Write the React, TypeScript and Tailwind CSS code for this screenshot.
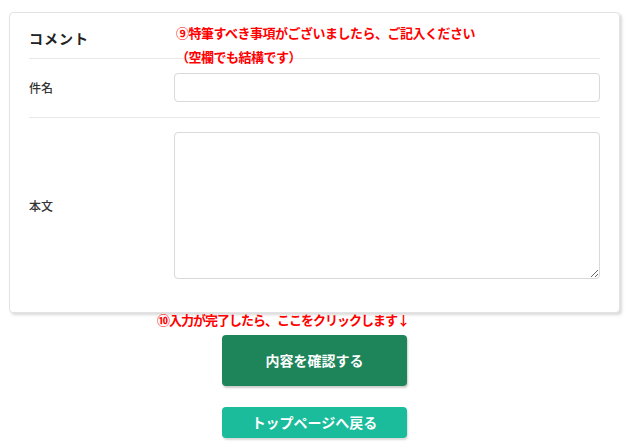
import React from 'react';

const font = { fontFamily: '"Noto Sans CJK JP", "Noto Sans", sans-serif' };

const App: React.FC = () => {
  return (
    <div className="relative w-[627px] h-[443px] bg-white text-[#333]" style={font}>
      {/* Comment card */}
      <div className="ml-[9px] mt-[12px] w-[611px] rounded-[4px] border border-[#e3e3e3] bg-white px-[19px] pb-[33px] shadow-[2px_2px_3px_rgba(0,0,0,0.15)]">
        <div className="pt-[15px] pb-[10px] border-b border-[#e8e8e8]">
          <h3 className="text-[14px] font-bold leading-5 tracking-[1px] text-[#222]">コメント</h3>
        </div>

        <div className="flex items-center pt-[14px] pb-[15px] border-b border-[#e8e8e8]">
          <label className="w-[145px] shrink-0 text-[12px] font-medium">件名</label>
          <input type="text" className="h-[29px] flex-1 rounded-[4px] border border-[#d9d9d9] px-2 text-[13px] outline-none" />
        </div>

        <div className="flex items-center pt-[14px]">
          <label className="w-[145px] shrink-0 text-[12px] font-medium">本文</label>
          <textarea className="h-[147px] flex-1 rounded-[4px] border border-[#d9d9d9] px-2 py-1 text-[13px] outline-none" />
        </div>
      </div>

      {/* Buttons */}
      <div className="mt-[22px] flex flex-col items-center gap-[21px] pl-[2px]">
        <button className="h-[51px] w-[185px] rounded-[4px] bg-[#1e855a] text-[14px] font-bold text-white shadow-[1px_2px_2px_rgba(0,0,0,0.2)]">
          内容を確認する
        </button>
        <button className="h-[31px] w-[185px] rounded-[4px] bg-[#1abc9c] text-[14px] font-bold text-white shadow-[1px_2px_2px_rgba(0,0,0,0.15)]">
          トップページへ戻る
        </button>
      </div>

      {/* Red annotations */}
      <div className="absolute left-[176px] top-[12px] text-[13px] font-bold leading-[18px] tracking-[-0.5px] text-[#ff0000]">
        <p>⑨特筆すべき事項がございましたら、ご記入ください</p>
        <p className="mt-[6px]">（空欄でも結構です）</p>
      </div>
      <p className="absolute left-[157px] top-[299px] text-[13px] font-bold leading-[18px] tracking-[-1px] text-[#ff0000]">
        ⑩入力が完了したら、ここをクリックします↓
      </p>
    </div>
  );
};

export default App;
